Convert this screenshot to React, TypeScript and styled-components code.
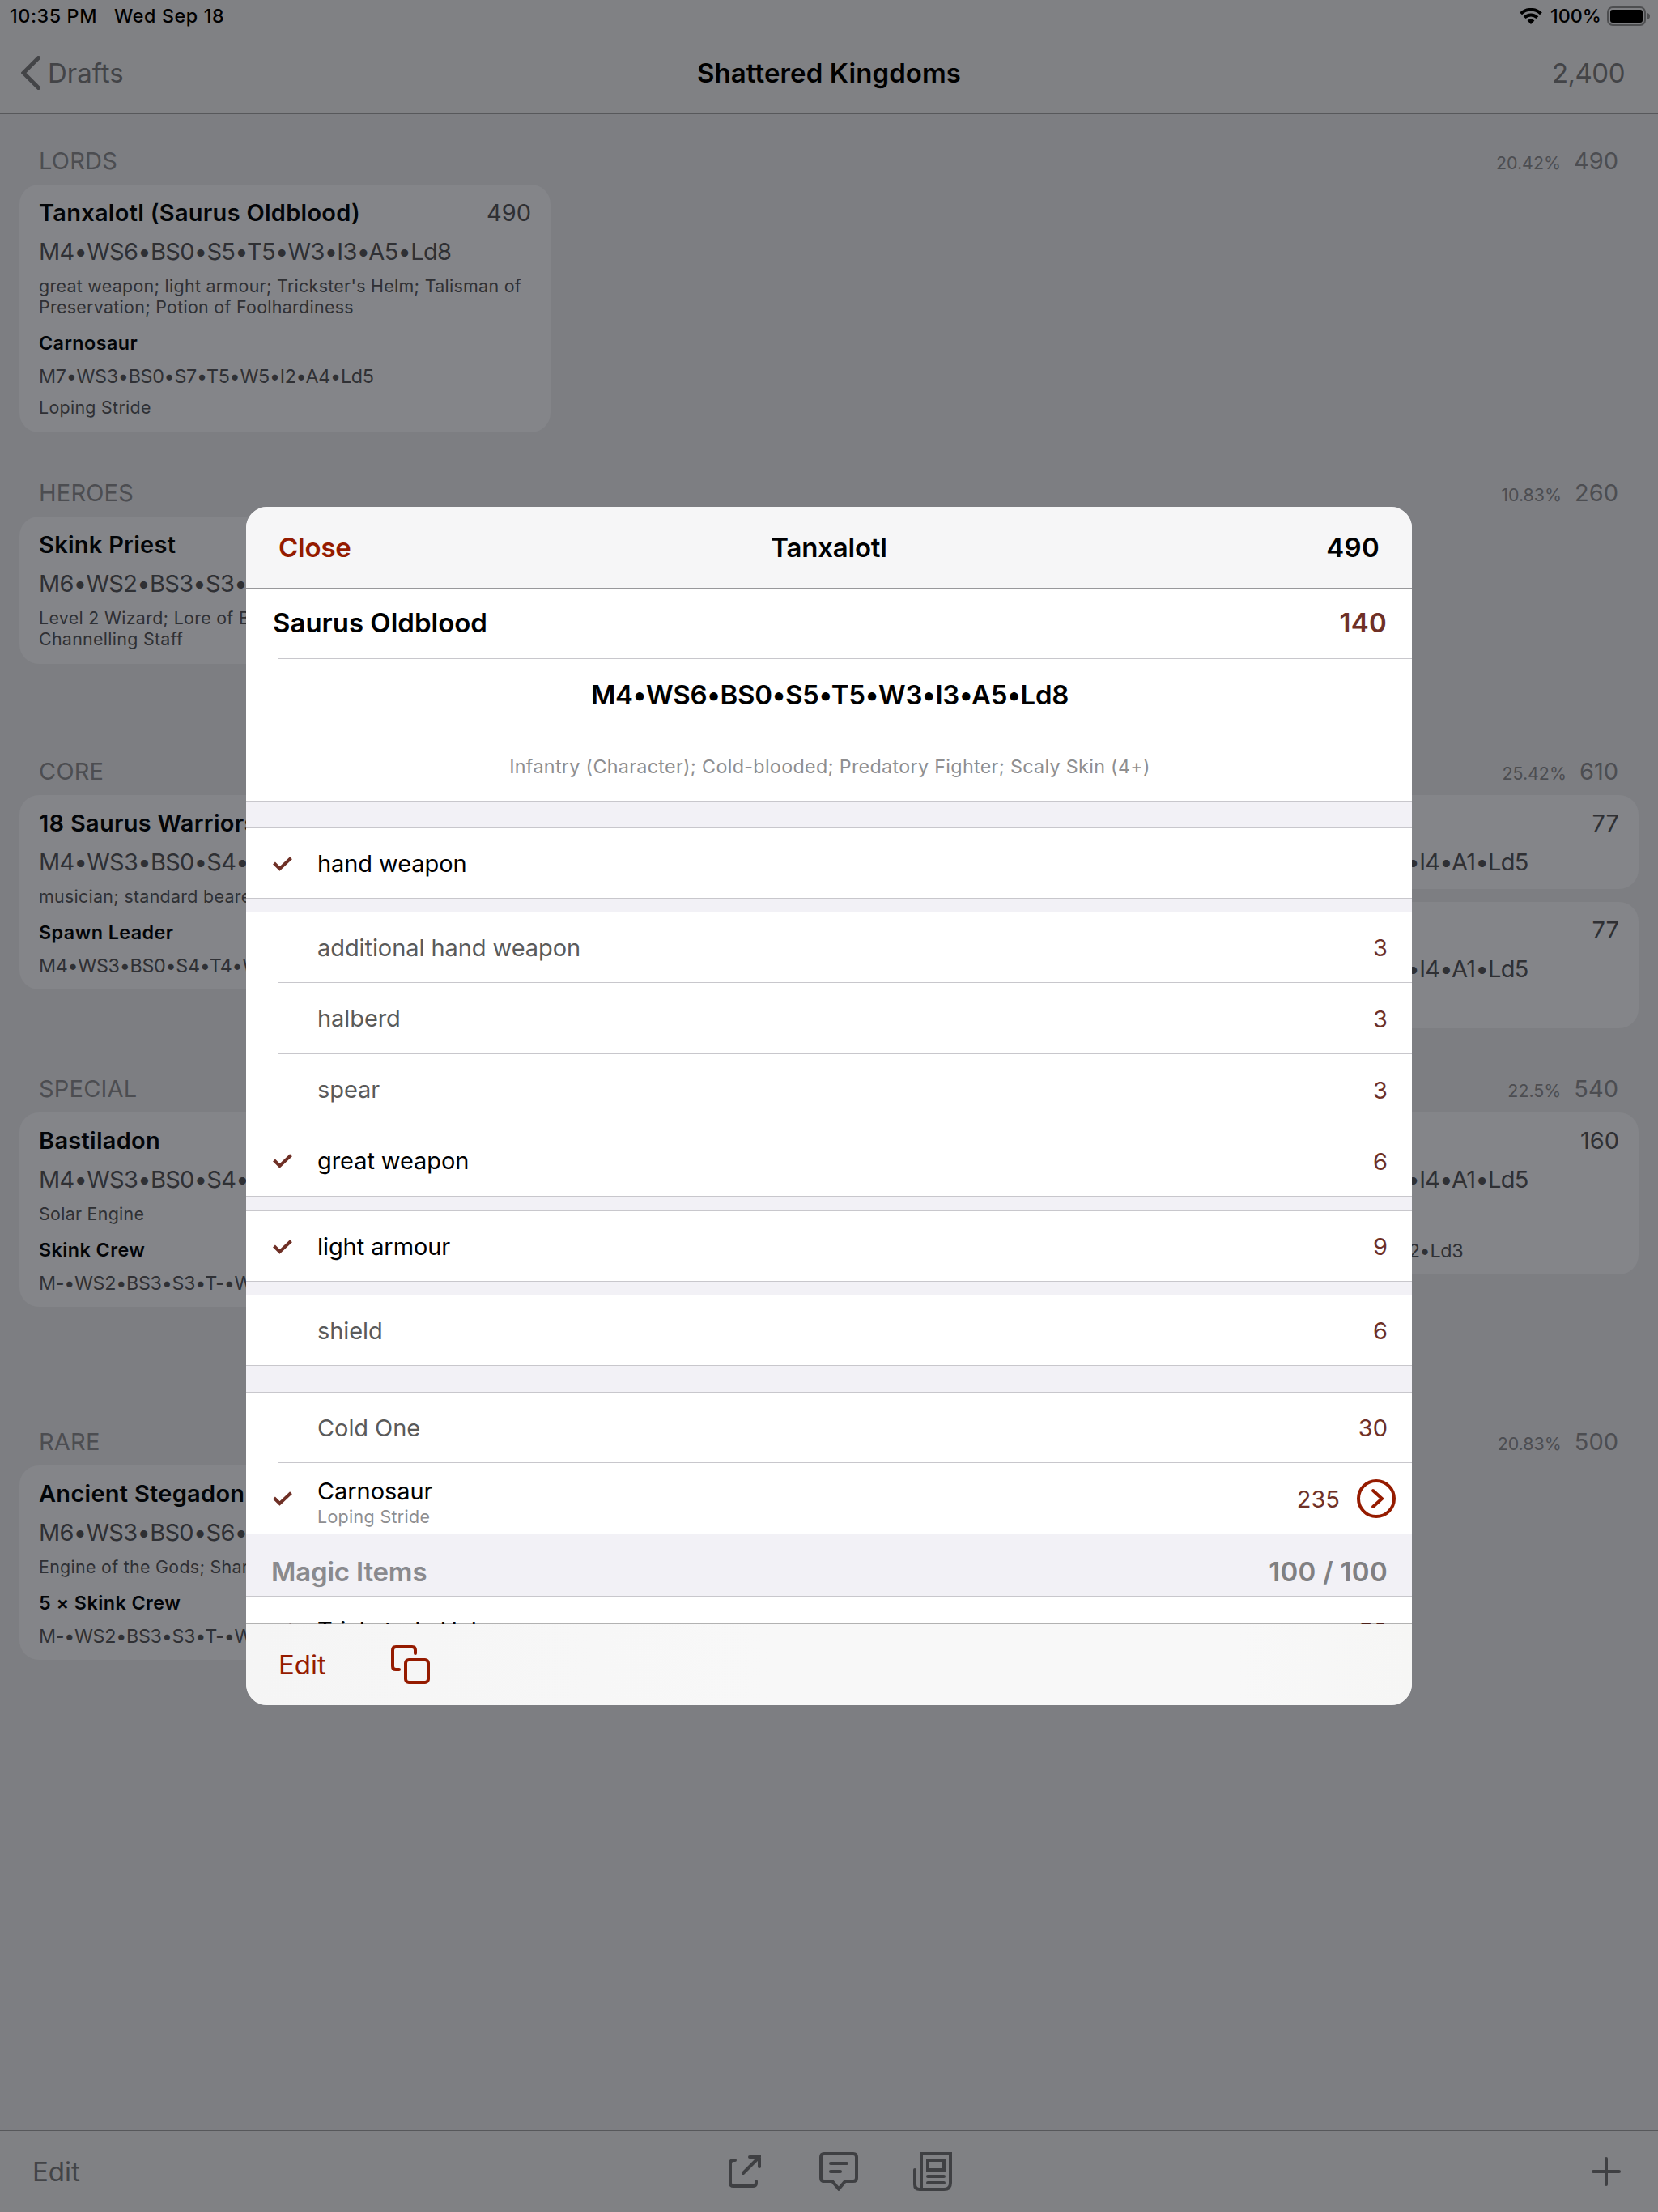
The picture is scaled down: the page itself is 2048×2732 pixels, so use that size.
import React from "react";
import styled, { createGlobalStyle } from "styled-components";

type Unit = {
  name: string;
  cost: string;
  stats: string;
  note?: string;
  crew?: { name?: string; stats: string; note?: string };
};

type Category = {
  title: string;
  percent: string;
  total: string;
  minHeight?: number;
  columns: Unit[][];
};

type Option = {
  label: string;
  cost?: string;
  note?: string;
  checked?: boolean;
  detail?: boolean;
};

const skinks: Unit = {
  name: "10 Skink Skirmishers",
  cost: "77",
  stats: "M6•WS2•BS3•S3•T2•W1•I4•A1•Ld5",
};

const categories: Category[] = [
  {
    title: "LORDS",
    percent: "20.42%",
    total: "490",
    columns: [
      [
        {
          name: "Tanxalotl (Saurus Oldblood)",
          cost: "490",
          stats: "M4•WS6•BS0•S5•T5•W3•I3•A5•Ld8",
          note: "great weapon; light armour; Trickster's Helm; Talisman of Preservation; Potion of Foolhardiness",
          crew: {
            name: "Carnosaur",
            stats: "M7•WS3•BS0•S7•T5•W5•I2•A4•Ld5",
            note: "Loping Stride",
          },
        },
      ],
    ],
  },
  {
    title: "HEROES",
    percent: "10.83%",
    total: "260",
    minHeight: 240,
    columns: [
      [
        {
          name: "Skink Priest",
          cost: "",
          stats: "M6•WS2•BS3•S3•T2•W2•I6•A1•Ld6",
          note: "Level 2 Wizard; Lore of Beasts; Cube of Darkness; Channelling Staff",
        },
      ],
    ],
  },
  {
    title: "CORE",
    percent: "25.42%",
    total: "610",
    columns: [
      [
        {
          name: "18 Saurus Warriors",
          cost: "",
          stats: "M4•WS3•BS0•S4•T4•W1•I1•A2•Ld8",
          note: "musician; standard bearer; spear",
          crew: { name: "Spawn Leader", stats: "M4•WS3•BS0•S4•T4•W1•I1•A3•Ld8" },
        },
      ],
      [],
      [skinks, { ...skinks, note: "javelin & shield" }],
    ],
  },
  {
    title: "SPECIAL",
    percent: "22.5%",
    total: "540",
    minHeight: 332,
    columns: [
      [
        {
          name: "Bastiladon",
          cost: "",
          stats: "M4•WS3•BS0•S4•T5•W4•I1•A3•Ld6",
          note: "Solar Engine",
          crew: { name: "Skink Crew", stats: "M-•WS2•BS3•S3•T-•W-•I4•A1•Ld5" },
        },
      ],
      [],
      [
        {
          name: "Salamander Pack",
          cost: "160",
          stats: "M6•WS2•BS3•S3•T2•W1•I4•A1•Ld5",
          crew: { name: "Salamander", stats: "M6•WS3•BS3•S5•T4•W3•I4•A2•Ld3" },
        },
      ],
    ],
  },
  {
    title: "RARE",
    percent: "20.83%",
    total: "500",
    columns: [
      [
        {
          name: "Ancient Stegadon",
          cost: "",
          stats: "M6•WS3•BS0•S6•T6•W5•I1•A3•Ld6",
          note: "Engine of the Gods; Sharpened Horns",
          crew: { name: "5 × Skink Crew", stats: "M-•WS2•BS3•S3•T-•W-•I4•A1•Ld5" },
        },
      ],
    ],
  },
];

const groups: { gap: number; options: Option[] }[] = [
  { gap: 32, options: [{ label: "hand weapon", checked: true }] },
  {
    gap: 16,
    options: [
      { label: "additional hand weapon", cost: "3" },
      { label: "halberd", cost: "3" },
      { label: "spear", cost: "3" },
      { label: "great weapon", cost: "6", checked: true },
    ],
  },
  { gap: 17, options: [{ label: "light armour", cost: "9", checked: true }] },
  { gap: 16, options: [{ label: "shield", cost: "6" }] },
  {
    gap: 32,
    options: [
      { label: "Cold One", cost: "30" },
      { label: "Carnosaur", cost: "235", note: "Loping Stride", checked: true, detail: true },
    ],
  },
];

const Check = () => (
  <CheckIcon viewBox="0 0 24 18">
    <path d="M1.5 8 L8.5 15 L22.5 1.8" />
  </CheckIcon>
);

const OptionRow = ({ option, short }: { option: Option; short?: boolean }) => (
  <Row $short={short}>
    <CheckSlot>{option.checked && <Check />}</CheckSlot>
    <OptionText>
      <OptionLabel $on={option.checked}>{option.label}</OptionLabel>
      {option.note && <OptionNote>{option.note}</OptionNote>}
    </OptionText>
    <OptionCost>{option.cost}</OptionCost>
    {option.detail && (
      <DetailIcon viewBox="0 0 48 48">
        <circle cx="24" cy="24" r="22" />
        <path d="M20 14 L31 24 L20 34" />
      </DetailIcon>
    )}
  </Row>
);

const UnitCard = ({ unit }: { unit: Unit }) => (
  <Card>
    <CardHead>
      <CardTitle>{unit.name}</CardTitle>
      <span>{unit.cost}</span>
    </CardHead>
    <Stats>{unit.stats}</Stats>
    {unit.note && <Note>{unit.note}</Note>}
    {unit.crew && (
      <>
        <CrewName>{unit.crew.name}</CrewName>
        <CrewStats>{unit.crew.stats}</CrewStats>
        {unit.crew.note && <Note>{unit.crew.note}</Note>}
      </>
    )}
  </Card>
);

const App = () => {
  return (
    <Screen>
      <GlobalStyle />
      <TopBar>
        <StatusBar>
          <span>10:35 PM</span>
          <StatusDate>Wed Sep 18</StatusDate>
          <WifiIcon viewBox="0 0 28 20">
            <path d="M1.6 6.9 A17.8 17.8 0 0 1 26.4 6.9" />
            <path d="M6.1 11.6 A11.3 11.3 0 0 1 21.9 11.6" />
            <path className="dot" d="M14 20 L9.6 15.4 A6.3 6.3 0 0 1 18.4 15.4 Z" />
          </WifiIcon>
          <Percent>100%</Percent>
          <BatteryIcon viewBox="0 0 54 24">
            <rect className="case" x="1" y="1" width="46" height="22" rx="6" />
            <rect x="4" y="4" width="40" height="16" rx="3" />
            <path className="cap" d="M50 8 Q53 9 53 12 Q53 15 50 16 Z" />
          </BatteryIcon>
        </StatusBar>
        <NavBar>
          <Back>
            <BackIcon viewBox="0 0 24 42">
              <path d="M21.5 2.5 L3 21 L21.5 39.5" />
            </BackIcon>
            Drafts
          </Back>
          <NavTitle>Shattered Kingdoms</NavTitle>
          <NavTotal>2,400</NavTotal>
        </NavBar>
      </TopBar>

      <Roster>
        {categories.map((category) => (
          <section key={category.title}>
            <SectionHead>
              <SectionTitle>{category.title}</SectionTitle>
              <SectionPercent>{category.percent}</SectionPercent>
              <SectionTotal>{category.total}</SectionTotal>
            </SectionHead>
            <Columns $minHeight={category.minHeight}>
              {category.columns.map((units, i) => (
                <Column key={i}>
                  {units.map((unit, j) => (
                    <UnitCard key={j} unit={unit} />
                  ))}
                </Column>
              ))}
            </Columns>
          </section>
        ))}
      </Roster>

      <BottomBar>
        <BarText>Edit</BarText>
        <BarIcons>
          <BarIcon viewBox="-4 -4 48 48">
            <path d="M8 6 H6 Q2 6 2 10 V34 Q2 38 6 38 H30 Q34 38 34 34 V32" />
            <path d="M18 22 L38 2 M26 2 H38 V14" />
          </BarIcon>
          <BarIcon viewBox="0 0 48 48">
            <path d="M6 2 H42 Q46 2 46 6 V32 Q46 36 42 36 H32 L24 45.5 L16 36 H6 Q2 36 2 32 V6 Q2 2 6 2 Z" />
            <path d="M14 14 H34 M14 24 H26" />
          </BarIcon>
          <BarIcon viewBox="0 0 48 48">
            <path d="M10 46 V2 H46 V38 Q46 46 38 46 H8 Q2 46 2 40 V22" />
            <path d="M18 10 H38 V22 H18 Z M18 30 H38 M18 38 H38" />
          </BarIcon>
        </BarIcons>
        <PlusIcon viewBox="0 0 36 36">
          <path d="M18 2 V34 M2 18 H34" />
        </PlusIcon>
      </BottomBar>

      <Overlay>
        <Modal>
          <ModalHead>
            <CloseButton>Close</CloseButton>
            <ModalTitle>Tanxalotl</ModalTitle>
            <ModalTotal>490</ModalTotal>
          </ModalHead>
          <ModalBody>
            <Group $plain>
              <Row>
                <ProfileName>Saurus Oldblood</ProfileName>
                <ProfileCost>140</ProfileCost>
              </Row>
              <Row>
                <ProfileStats>M4•WS6•BS0•S5•T5•W3•I3•A5•Ld8</ProfileStats>
              </Row>
              <Row>
                <ProfileRules>
                  Infantry (Character); Cold-blooded; Predatory Fighter; Scaly Skin (4+)
                </ProfileRules>
              </Row>
            </Group>
            {groups.map((group, i) => (
              <Group key={i} $gap={group.gap}>
                {group.options.map((option) => (
                  <OptionRow key={option.label} option={option} />
                ))}
              </Group>
            ))}
            <GroupTitle>
              <span>Magic Items</span>
              <GroupLimit>100 / 100</GroupLimit>
            </GroupTitle>
            <Group>
              <OptionRow short option={{ label: "Trickster's Helm", cost: "50", checked: true }} />
            </Group>
          </ModalBody>
          <ModalBar>
            <EditButton>Edit</EditButton>
            <CopyIcon viewBox="0 0 48 48">
              <path d="M30 10 V6 Q30 2 26 2 H6 Q2 2 2 6 V26 Q2 30 6 30 H10" />
              <rect x="18" y="18" width="28" height="28" rx="4" />
            </CopyIcon>
          </ModalBar>
        </Modal>
      </Overlay>
    </Screen>
  );
};

export default App;

const GlobalStyle = createGlobalStyle`
  * {
    box-sizing: border-box;
  }
  body {
    margin: 0;
    background: #7d7e82;
    font-family: Inter, "Liberation Sans", sans-serif;
  }
`;

const Screen = styled.div`
  display: flex;
  flex-direction: column;
  position: relative;
  width: 2048px;
  height: 2732px;
  overflow: hidden;
  color: #2f3034;
  background: #7d7e82;
`;

const TopBar = styled.header`
  flex: none;
  height: 140px;
  background: #808184;
  box-shadow: 0 1px 0 #57585b;
`;

const StatusBar = styled.div`
  display: flex;
  align-items: center;
  height: 40px;
  padding: 0 9px 1px 12px;
  font-size: 23.3px;
  font-weight: 500;
  letter-spacing: 0.6px;
  color: #000;
`;

const StatusDate = styled.span`
  margin-left: 21px;
`;

const WifiIcon = styled.svg`
  width: 28px;
  height: 20px;
  margin-left: auto;
  fill: none;
  stroke: #000;
  stroke-width: 4;
  .dot {
    fill: #000;
    stroke: none;
  }
`;

const Percent = styled.span`
  margin: 0 7px 0 10px;
  letter-spacing: 0;
`;

const BatteryIcon = styled.svg`
  width: 54px;
  height: 24px;
  .case {
    fill: none;
    stroke: #4d4e50;
    stroke-width: 2;
  }
  .cap {
    fill: #4d4e50;
  }
`;

const NavBar = styled.div`
  display: grid;
  grid-template-columns: 1fr auto 1fr;
  align-items: center;
  height: 100px;
  padding: 0 41px;
  font-size: 33px;
  line-height: 42px;
  color: #434447;
`;

const Back = styled.div`
  display: flex;
  align-items: center;
  gap: 9px;
  margin-left: -15px;
`;

const BackIcon = styled.svg`
  width: 24px;
  height: 42px;
  fill: none;
  stroke: #434447;
  stroke-width: 5;
  stroke-linecap: round;
`;

const NavTitle = styled.h1`
  margin: 0;
  font-size: 33px;
  font-weight: 600;
  letter-spacing: 0.1px;
  color: #000;
`;

const NavTotal = styled.span`
  text-align: right;
  letter-spacing: -0.5px;
`;

const Roster = styled.main`
  display: flex;
  flex-direction: column;
  flex: 1;
  gap: 16px;
  min-height: 0;
  padding: 0 24px;
`;

const SectionHead = styled.div`
  display: flex;
  align-items: baseline;
  height: 88px;
  padding: 41px 25px 0 24px;
  color: #4c4d51;
  line-height: 36px;
`;

const SectionTitle = styled.h2`
  flex: 1;
  margin: 0;
  font-size: 29px;
  font-weight: 400;
  letter-spacing: 0.2px;
`;

const SectionPercent = styled.span`
  margin-right: 16px;
  font-size: 21.4px;
`;

const SectionTotal = styled.span`
  font-size: 29px;
`;

const Columns = styled.div<{ $minHeight?: number }>`
  display: grid;
  grid-template-columns: repeat(3, 1fr);
  gap: 16px;
  min-height: ${({ $minHeight }) => $minHeight || 0}px;
`;

const Column = styled.div`
  display: flex;
  flex-direction: column;
  align-items: stretch;
  gap: 16px;
`;

const Card = styled.article`
  padding: 17px 24px 15px;
  border-radius: 24px;
  background: #848589;
`;

const CardHead = styled.div`
  display: flex;
  justify-content: space-between;
  font-size: 29px;
  line-height: 36px;
`;

const CardTitle = styled.span`
  font-weight: 600;
  letter-spacing: 0.27px;
  color: #030508;
`;

const Stats = styled.div`
  margin-top: 12px;
  font-size: 29px;
  line-height: 36px;
  letter-spacing: -0.68px;
  white-space: nowrap;
`;

const Note = styled.div`
  margin-top: 11px;
  padding-bottom: 3px;
  font-size: 21.4px;
  line-height: 26px;
  letter-spacing: 0.3px;
`;

const CrewName = styled.div`
  margin-top: 14px;
  font-size: 23.3px;
  font-weight: 600;
  line-height: 30px;
  letter-spacing: 0.45px;
  color: #030508;
`;

const CrewStats = styled.div`
  margin-top: 12px;
  font-size: 23.3px;
  line-height: 28px;
  letter-spacing: -0.3px;
  white-space: nowrap;
`;

const BottomBar = styled.footer`
  display: grid;
  grid-template-columns: 1fr auto 1fr;
  align-items: center;
  flex: none;
  height: 101px;
  padding: 0 46px 0 40px;
  border-top: 1px solid #57585b;
  background: #808184;
`;

const BarText = styled.span`
  font-size: 33px;
  color: #434447;
`;

const BarIcons = styled.div`
  display: flex;
  gap: 68px;
  margin-left: 30px;
`;

const BarIcon = styled.svg`
  width: 48px;
  height: 48px;
  fill: none;
  stroke: #3f4043;
  stroke-width: 4;
  stroke-linecap: round;
`;

const PlusIcon = styled(BarIcon)`
  width: 36px;
  height: 36px;
  justify-self: end;
`;

const Overlay = styled.div`
  display: flex;
  align-items: center;
  justify-content: center;
  position: absolute;
  inset: 0;
`;

const Modal = styled.div`
  display: flex;
  flex-direction: column;
  width: 1440px;
  height: 1480px;
  border-radius: 26px;
  overflow: hidden;
  background: #f2f1f6;
  color: #000;
`;

const ModalHead = styled.div`
  display: grid;
  grid-template-columns: 1fr auto 1fr;
  align-items: center;
  flex: none;
  height: 101px;
  padding: 0 40px;
  border-bottom: 1px solid #98989b;
  background: #f6f6f7;
  font-size: 33px;
  font-weight: 600;
  letter-spacing: -0.2px;
`;

const CloseButton = styled.span`
  color: #951b00;
`;

const ModalTitle = styled.span``;

const ModalTotal = styled.span`
  text-align: right;
  letter-spacing: 0.3px;
`;

const ModalBody = styled.div`
  flex: 1;
  min-height: 0;
  overflow: hidden;
`;

const Row = styled.div<{ $short?: boolean }>`
  display: flex;
  align-items: center;
  position: relative;
  height: 88px;
  padding: 0 31px 0 33px;
  &:first-child {
    height: ${({ $short }) => ($short ? 84 : 87)}px;
  }
  &::after {
    content: "";
    position: absolute;
    left: 40px;
    right: 0;
    bottom: 0;
    height: 1px;
    background: #c8c7cc;
  }
  &:last-child::after {
    left: 0;
  }
`;

const Group = styled.div<{ $plain?: boolean; $gap?: number }>`
  margin-top: ${({ $gap }) => $gap || 0}px;
  border-top: ${({ $plain }) => ($plain ? "none" : "1px solid #c8c7cc")};
  background: #fff;
`;

const ProfileName = styled.span`
  flex: 1;
  padding-bottom: 3px;
  font-size: 33px;
  font-weight: 600;
`;

const ProfileCost = styled.span`
  padding-bottom: 3px;
  font-size: 33px;
  font-weight: 600;
  letter-spacing: 0.3px;
  color: #6f3026;
`;

const ProfileStats = styled.span`
  flex: 1;
  text-align: center;
  font-size: 33px;
  font-weight: 600;
  letter-spacing: -0.3px;
`;

const ProfileRules = styled.span`
  flex: 1;
  text-align: center;
  font-size: 23.3px;
  letter-spacing: 0.32px;
  color: #8e8e90;
`;

const CheckSlot = styled.span`
  display: flex;
  width: 55px;
`;

const CheckIcon = styled.svg`
  width: 24px;
  height: 18px;
  fill: none;
  stroke: #6f3026;
  stroke-width: 4;
`;

const OptionText = styled.div`
  display: flex;
  flex: 1;
  flex-direction: column;
`;

const OptionLabel = styled.span<{ $on?: boolean }>`
  font-size: 29px;
  line-height: 36px;
  letter-spacing: -0.08px;
  color: ${({ $on }) => ($on ? "#000" : "#5a5a5a")};
`;

const OptionNote = styled.span`
  margin-bottom: -7px;
  font-size: 21.4px;
  line-height: 26px;
  letter-spacing: 0.35px;
  color: #8e8e90;
`;

const OptionCost = styled.span`
  margin-right: -1px;
  font-size: 29px;
  color: #6f3026;
`;

const DetailIcon = styled.svg`
  width: 48px;
  height: 48px;
  margin: 0 -11px 0 22px;
  fill: none;
  stroke: #951b00;
  stroke-width: 4;
  stroke-linecap: round;
`;

const GroupTitle = styled.h3`
  display: flex;
  align-items: flex-end;
  justify-content: space-between;
  height: 76px;
  margin: 0;
  padding: 0 30px 10px 31px;
  font-size: 33px;
  font-weight: 600;
  line-height: 40px;
  letter-spacing: -0.2px;
  color: #8a8a8e;
`;

const GroupLimit = styled.span`
  letter-spacing: 0.3px;
  color: #808082;
`;

const ModalBar = styled.div`
  display: flex;
  align-items: center;
  position: relative;
  flex: none;
  height: 101px;
  margin-top: -1px;
  padding: 0 40px;
  border-top: 1px solid rgba(0, 0, 0, 0.3);
  background: linear-gradient(to right, #f5f5f5, #f8f8f8 45%, #f8f8f8 85%, #f6f6f5);
  background-clip: padding-box;
`;

const EditButton = styled.span`
  width: 139px;
  font-size: 33px;
  color: #951b00;
`;

const CopyIcon = styled.svg`
  width: 48px;
  height: 48px;
  fill: none;
  stroke: #951b00;
  stroke-width: 4;
  stroke-linecap: round;
`;
